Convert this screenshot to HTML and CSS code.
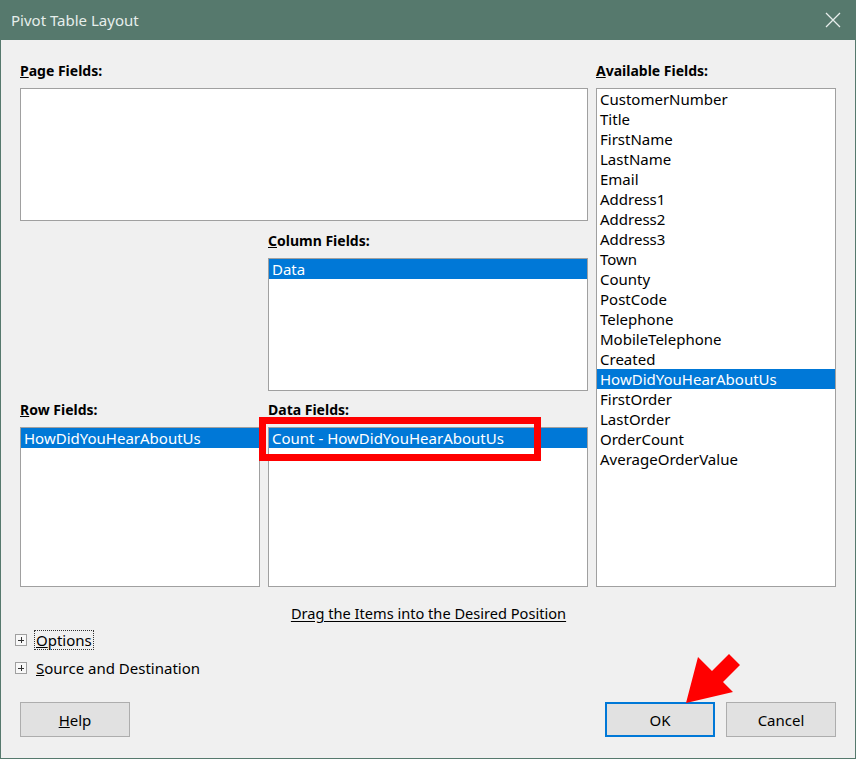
FILE: index.html
```html
<!DOCTYPE html>
<html>
<head>
<meta charset="utf-8">
<link rel="stylesheet" href="styles.css">
</head>
<body>
<div class="window">
  <div class="titlebar">
    <span class="title">Pivot Table Layout</span>
    <svg class="close" width="16" height="16" viewBox="0 0 16 16"><path d="M1 1L15 15M15 1L1 15" stroke="#e8eeec" stroke-width="1.3" fill="none"/></svg>
  </div>
  <div class="content">
    <div class="grid">
      <div class="lbl l-page"><u>P</u>age Fields:</div>
      <div class="box b-page"></div>
      <div class="lbl l-avail"><u>A</u>vailable Fields:</div>
      <div class="box b-avail">
        <div class="item">CustomerNumber</div>
        <div class="item">Title</div>
        <div class="item">FirstName</div>
        <div class="item">LastName</div>
        <div class="item">Email</div>
        <div class="item">Address1</div>
        <div class="item">Address2</div>
        <div class="item">Address3</div>
        <div class="item">Town</div>
        <div class="item">County</div>
        <div class="item">PostCode</div>
        <div class="item">Telephone</div>
        <div class="item">MobileTelephone</div>
        <div class="item">Created</div>
        <div class="item sel">HowDidYouHearAboutUs</div>
        <div class="item">FirstOrder</div>
        <div class="item">LastOrder</div>
        <div class="item">OrderCount</div>
        <div class="item">AverageOrderValue</div>
      </div>
      <div class="lbl l-col"><u>C</u>olumn Fields:</div>
      <div class="box b-col"><div class="item sel">Data</div></div>
      <div class="lbl l-row"><u>R</u>ow Fields:</div>
      <div class="box b-row"><div class="item sel">HowDidYouHearAboutUs</div></div>
      <div class="lbl l-data">Data Fields:</div>
      <div class="box b-data"><div class="item sel">Count - HowDidYouHearAboutUs</div></div>
    </div>
    <div class="hint"><span>Drag the Items into the Desired Position</span></div>
    <div class="expander first"><span class="plus"></span><span class="exp-label focus"><u>O</u>ptions</span></div>
    <div class="expander"><span class="plus"></span><span class="exp-label"><u>S</u>ource and Destination</span></div>
    <div class="buttons">
      <button class="btn"><u>H</u>elp</button>
      <div class="spacer"></div>
      <button class="btn default">OK</button>
      <button class="btn">Cancel</button>
    </div>
  </div>
  <div class="redbox"></div>
  <svg class="arrow" width="856" height="759" viewBox="0 0 856 759">
    <polygon points="686,703 698,657 712,671 729,654 740,665 723,682 733,692" fill="#ff0000"/>
  </svg>
</div>
</body>
</html>
```

FILE: styles.css
```css
* { box-sizing: border-box; }
html, body { margin: 0; padding: 0; }
body {
  font-family: "Noto Sans", "Open Sans", sans-serif;
  font-size: 15px;
  color: #000;
  background: #f0f0f0;
}
.window {
  position: relative;
  width: 856px;
  height: 759px;
  border: 1px solid #56796d;
  border-top: none;
  background: #f0f0f0;
  overflow: hidden;
}
.titlebar {
  height: 40px;
  background: #56796d;
  display: flex;
  align-items: center;
  justify-content: space-between;
  padding: 0 7px 0 11px;
  margin: 0 -1px;
}
.title {
  color: #e6eeeb;
  font-size: 15px;
}
.close { display: block; margin-right: 8px; }
.content {
  padding: 21px 19px 0 19px;
}
.grid {
  display: grid;
  grid-template-columns: 240px 320px 240px;
  column-gap: 8px;
  grid-template-rows: 27px 133px 37px 133px 36px 160px;
}
.lbl {
  font-weight: bold;
  font-size: 14px;
  align-self: start;
  height: 20px;
  line-height: 20px;
  white-space: nowrap;
}
.l-page { grid-column: 1 / 3; grid-row: 1; }
.l-avail { grid-column: 3; grid-row: 1; }
.b-page { grid-column: 1 / 3; grid-row: 2; }
.b-avail { grid-column: 3; grid-row: 2 / 7; }
.l-col { grid-column: 2; grid-row: 3; align-self: end; margin-bottom: 7px; }
.b-col { grid-column: 2; grid-row: 4; }
.l-row { grid-column: 1; grid-row: 5; align-self: end; margin-bottom: 7px; }
.l-data { grid-column: 2; grid-row: 5; align-self: end; margin-bottom: 7px; }
.b-row { grid-column: 1; grid-row: 6; }
.b-data { grid-column: 2; grid-row: 6; }
.box {
  background: #fff;
  border: 1px solid #a0a0a0;
  overflow: hidden;
}
.item {
  height: 20px;
  line-height: 20px;
  padding-left: 3px;
  white-space: nowrap;
}
.sel {
  background: #0078d7;
  color: #fff;
}
.hint {
  text-align: center;
  margin-top: 16px;
  height: 20px;
  line-height: 20px;
  padding-left: 1px;
  font-size: 14.6px;
}
.hint span { text-decoration: underline; text-underline-offset: 2px; }
.expander {
  display: flex;
  align-items: center;
  height: 20px;
  margin-left: -5px;
}
.expander.first { margin-top: 7px; }
.expander + .expander { margin-top: 8px; }
.plus {
  width: 12px;
  height: 12px;
  border: 1px solid #a0a0a0;
  background: #f8f8f8 linear-gradient(#333, #333) center / 6px 1px no-repeat;
  position: relative;
  margin-right: 7px;
}
.plus::after {
  content: "";
  position: absolute;
  left: 4.5px;
  top: 2px;
  width: 1px;
  height: 6px;
  background: #333;
}
.exp-label {
  line-height: 18px;
  padding: 0 1px;
  border: 1px dotted transparent;
}
.exp-label.focus { border-color: #333; }
.buttons {
  display: flex;
  margin-top: 24px;
  gap: 11px;
}
.spacer { flex: 1; }
.btn {
  font-family: inherit;
  font-size: 15px;
  width: 110px;
  height: 35px;
  background: #e1e1e1;
  border: 1px solid #adadad;
  color: #000;
  padding: 0;
}
.btn.default {
  border: 2px solid #0078d7;
}
.redbox {
  position: absolute;
  left: 258px;
  top: 417px;
  width: 282px;
  height: 44px;
  border: 7px solid #ff0000;
}
.arrow {
  position: absolute;
  left: -1px;
  top: 0;
  pointer-events: none;
}
```
